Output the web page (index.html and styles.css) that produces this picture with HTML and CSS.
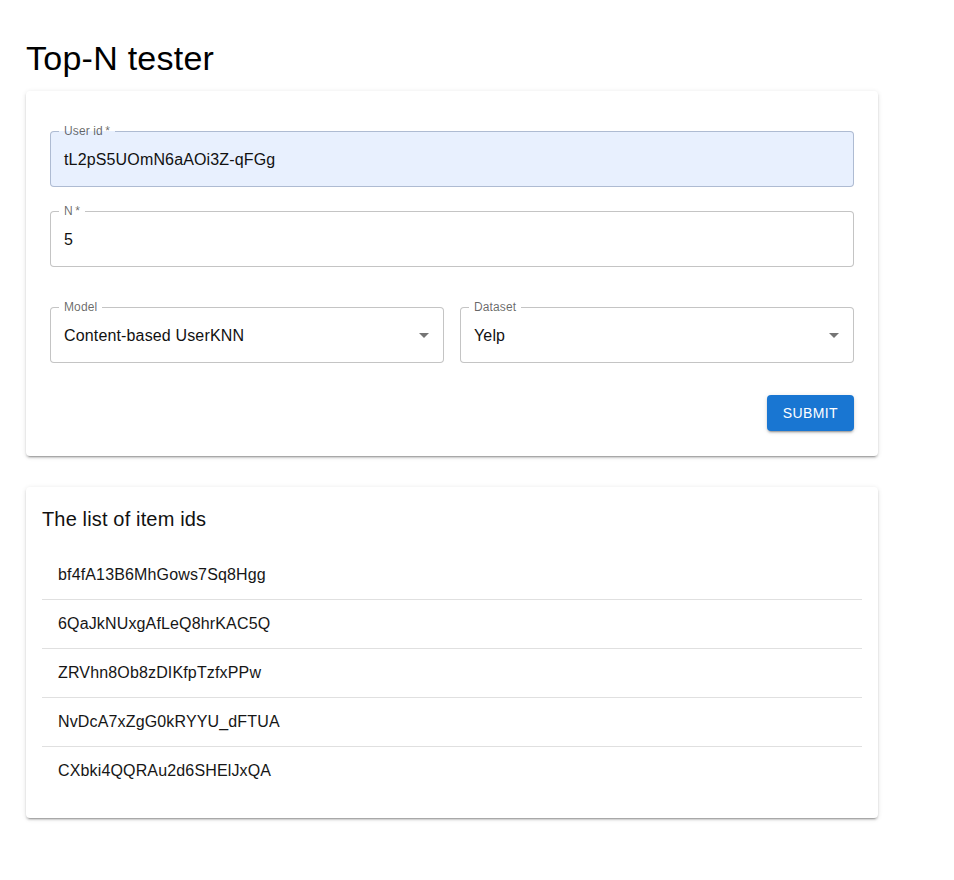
FILE: index.html
```html
<!DOCTYPE html>
<html lang="en">
<head>
<meta charset="utf-8">
<title>Top-N tester</title>
<link rel="stylesheet" href="styles.css">
</head>
<body>
<main class="page">
  <h1 class="title">Top-N tester</h1>
  <section class="card form-card">
    <div class="field field-autofill field-first">
      <label class="field-label">User id&thinsp;*</label>
      <span class="field-value">tL2pS5UOmN6aAOi3Z-qFGg</span>
    </div>
    <div class="field field-n">
      <label class="field-label">N&thinsp;*</label>
      <span class="field-value">5</span>
    </div>
    <div class="row">
      <div class="field field-select">
        <label class="field-label">Model</label>
        <span class="field-value">Content-based UserKNN</span>
        <svg class="arrow" viewBox="0 0 24 24" width="24" height="24"><path d="M7 10l5 5 5-5z"/></svg>
      </div>
      <div class="field field-select">
        <label class="field-label">Dataset</label>
        <span class="field-value">Yelp</span>
        <svg class="arrow" viewBox="0 0 24 24" width="24" height="24"><path d="M7 10l5 5 5-5z"/></svg>
      </div>
    </div>
    <div class="actions">
      <button class="btn" type="button">Submit</button>
    </div>
  </section>
  <section class="card list-card">
    <h2 class="list-title">The list of item ids</h2>
    <ul class="list">
      <li class="list-item">bf4fA13B6MhGows7Sq8Hgg</li>
      <li class="list-item">6QaJkNUxgAfLeQ8hrKAC5Q</li>
      <li class="list-item">ZRVhn8Ob8zDIKfpTzfxPPw</li>
      <li class="list-item">NvDcA7xZgG0kRYYU_dFTUA</li>
      <li class="list-item last">CXbki4QQRAu2d6SHElJxQA</li>
    </ul>
  </section>
</main>
</body>
</html>
```

FILE: styles.css
```css
* { box-sizing: border-box; }
body {
  margin: 0;
  background: #fff;
  font-family: "Liberation Sans", Arial, Helvetica, sans-serif;
  color: #161616;
}
.page {
  width: 878px;
  padding: 37px 0 40px 26px;
}
.title {
  margin: 0 0 12px;
  font-size: 34px;
  font-weight: 400;
  line-height: 42px;
  letter-spacing: 0.00735em;
  color: #000;
}
.card {
  background: #fff;
  border-radius: 4px;
  box-shadow: 0px 3px 1px -2px rgba(0,0,0,0.2), 0px 2px 2px 0px rgba(0,0,0,0.14), 0px 1px 5px 0px rgba(0,0,0,0.12);
}
.form-card {
  padding: 40px 24px 25px;
  display: flex;
  flex-direction: column;
}
.field {
  position: relative;
  height: 56px;
  border: 1px solid rgba(0,0,0,0.23);
  border-radius: 4px;
  padding: 0 13px;
  display: flex;
  align-items: center;
  background: #fff;
}
.field-autofill {
  background: #e8f0fe;
  border-color: rgba(80,100,140,0.38);
}
.field-n { margin-top: 24px; }
.field-label {
  position: absolute;
  top: -8px;
  left: 8px;
  padding: 0 5px;
  font-size: 12px;
  line-height: 14px;
  color: rgba(0,0,0,0.6);
  background: #fff;
  letter-spacing: 0.00938em;
}
.field-autofill .field-label {
  background: linear-gradient(#fff 50%, #e8f0fe 50%);
}
.field-value {
  font-size: 16px;
  line-height: 23px;
  letter-spacing: 0.00938em;
  color: #111;
}
.row {
  margin-top: 40px;
  display: grid;
  grid-template-columns: 1fr 1fr;
  column-gap: 16px;
}
.arrow {
  position: absolute;
  right: 7px;
  top: 15px;
  fill: rgba(0,0,0,0.54);
}
.actions {
  margin-top: 32px;
  display: flex;
  justify-content: flex-end;
}
.btn {
  height: 36px;
  padding: 6px 16px;
  border: 0;
  border-radius: 4px;
  background: #1976d2;
  color: #fff;
  font-family: inherit;
  font-size: 14px;
  font-weight: 500;
  letter-spacing: 0.02857em;
  text-transform: uppercase;
  box-shadow: 0px 3px 1px -2px rgba(0,0,0,0.2), 0px 2px 2px 0px rgba(0,0,0,0.14), 0px 1px 5px 0px rgba(0,0,0,0.12);
}
.list-card {
  margin-top: 31px;
  padding: 16px;
}
.list-title {
  margin: 0 0 8px;
  font-size: 20px;
  font-weight: 400;
  line-height: 32px;
  letter-spacing: 0.0075em;
  color: #111;
}
.list {
  list-style: none;
  margin: 0;
  padding: 8px 0 7px;
}
.list-item {
  height: 49px;
  padding: 12px 16px;
  font-size: 16px;
  line-height: 24px;
  letter-spacing: 0.00938em;
  border-bottom: 1px solid rgba(0,0,0,0.12);
}
.list-item.last {
  height: 48px;
  border-bottom: 0;
}
```
